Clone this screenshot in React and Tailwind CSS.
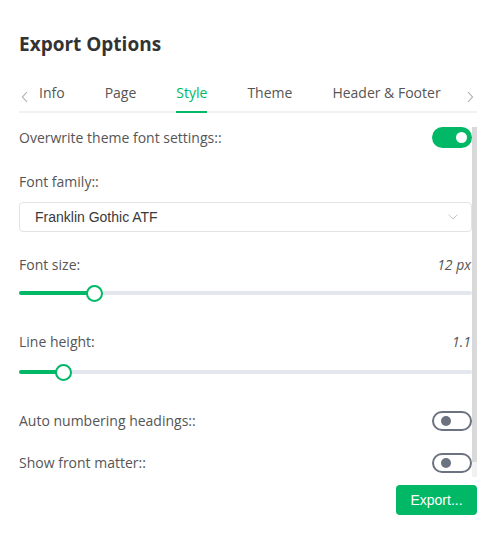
import React from "react";

function ToggleOn() {
  return (
    <div className="w-[40px] h-[21px] rounded-full bg-[#00b865] flex items-center justify-end pr-[5px]">
      <div className="w-[11px] h-[11px] rounded-full bg-white" />
    </div>
  );
}

function ToggleOff() {
  return (
    <div className="w-[40px] h-[20px] rounded-full border-2 border-[#6b7280] flex items-center pl-[7px] box-border">
      <div className="w-[10px] h-[10px] rounded-full bg-[#6b7280]" />
    </div>
  );
}

function Slider({ pos }) {
  return (
    <div className="relative h-[16px] flex items-center">
      <div className="w-full h-[4px] rounded-full bg-[#e4e7ee]" />
      <div
        className="absolute left-0 h-[4px] rounded-full bg-[#00b865]"
        style={{ width: pos }}
      />
      <div
        className="absolute w-[17px] h-[17px] rounded-full bg-white border-2 border-[#00b865] box-border"
        style={{ left: pos - 8.5 }}
      />
    </div>
  );
}

function Chevron({ dir }) {
  return (
    <svg width="8" height="12" viewBox="0 0 8 12">
      <path
        d={dir === "left" ? "M6 1 L1.5 6 L6 11" : "M2 1 L6.5 6 L2 11"}
        fill="none"
        stroke="#aaa"
        strokeWidth="1.1"
      />
    </svg>
  );
}

export default function App() {
  return (
    <div
      className="w-[495px] h-[535px] bg-white text-[#555] flex flex-col pl-[19px] pr-[18px] pt-[30px] box-border"
      style={{ fontFamily: '"Open Sans", sans-serif' }}
    >
      <h1 className="text-[19px] leading-[28px] font-bold text-[#333]">Export Options</h1>

      {/* Tabs */}
      <div className="mt-[22px] flex items-start border-b-2 border-[#f1f1f1] h-[33px] box-border">
        <div className="w-[20px] h-[31px] flex items-center pl-[2px] pt-[2px]">
          <Chevron dir="left" />
        </div>
        <div className="flex gap-[40px] text-[14px] leading-[20px]">
          <div className="pt-[3px] pb-[8px]">Info</div>
          <div className="pt-[3px] pb-[8px]">Page</div>
          <div className="pt-[3px] pb-[8px] text-[#00b865] border-b-2 border-[#00b865]">Style</div>
          <div className="pt-[3px] pb-[8px]">Theme</div>
          <div className="pt-[3px] pb-[8px]">Header &amp; Footer</div>
        </div>
        <div className="flex-1 h-[31px] flex items-center justify-end pr-[3px] pt-[2px]">
          <Chevron dir="right" />
        </div>
      </div>

      {/* Scroll area */}
      <div className="mt-[14px] flex h-[350px]">
        <div className="flex-1 flex flex-col text-[14px] leading-[20px]">
          <div className="flex items-center justify-between h-[21px]">
            <span>Overwrite theme font settings::</span>
            <ToggleOn />
          </div>

          <div className="mt-[24px]">Font family::</div>
          <div className="mt-[10px] h-[30px] border border-[#e3e3e3] rounded-[4px] flex items-center justify-between pl-[15px] pr-[13px] box-border">
            <span className="text-[#3a3a3a] text-[14px]" style={{ fontFamily: '"Liberation Sans", Arial, sans-serif' }}>
              Franklin Gothic ATF
            </span>
            <svg width="10" height="6" viewBox="0 0 10 6">
              <path d="M0.5 0.5 L5 5 L9.5 0.5" fill="none" stroke="#c8c8c8" strokeWidth="1" />
            </svg>
          </div>

          <div className="mt-[23px] flex justify-between">
            <span>Font size:</span>
            <span className="italic pr-[1px]">12 px</span>
          </div>
          <div className="mt-[10px]">
            <Slider pos={75} />
          </div>

          <div className="mt-[31px] flex justify-between">
            <span>Line height:</span>
            <span className="italic pr-[1px]">1.1</span>
          </div>
          <div className="mt-[12px]">
            <Slider pos={44} />
          </div>

          <div className="mt-[31px] flex items-center justify-between h-[20px]">
            <span>Auto numbering headings::</span>
            <ToggleOff />
          </div>
          <div className="mt-[22px] flex items-center justify-between h-[20px]">
            <span>Show front matter::</span>
            <ToggleOff />
          </div>
        </div>
        {/* scrollbar */}
        <div className="w-[5px] bg-[#f1f1f1] flex flex-col">
          <div className="h-[335px] bg-[#d9d9d9]" />
        </div>
      </div>

      <div className="mt-[8px] flex justify-end">
        <button
          className="w-[81px] h-[30px] rounded-[4px] bg-[#00b865] text-white text-[14px]"
          style={{ fontFamily: '"Liberation Sans", Arial, sans-serif' }}
        >
          Export...
        </button>
      </div>
    </div>
  );
}
